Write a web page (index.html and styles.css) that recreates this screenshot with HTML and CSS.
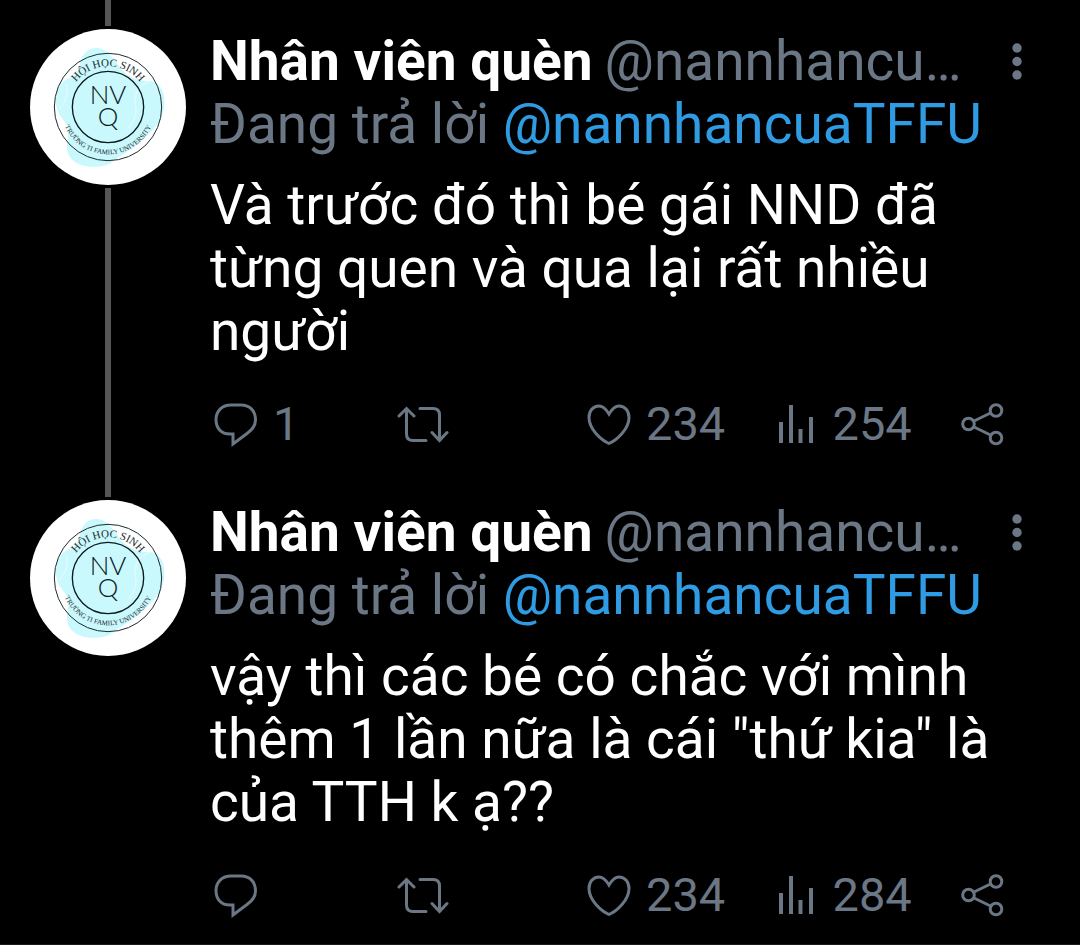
FILE: index.html
```html
<!DOCTYPE html>
<html lang="vi">
<head>
  <meta charset="UTF-8">
  <meta name="viewport" content="width=device-width, initial-scale=1.0">
  <title>Nhân viên quèn</title>
  <link rel="stylesheet" href="styles.css">
</head>
<body>
  <!-- Shared icons -->
  <svg class="sprite" aria-hidden="true">
    <symbol id="logo" viewBox="0 0 468 468">
      <circle cx="234" cy="234" r="234" fill="#fff"/>
      <path d="M150 104C158 70 176 56 202 57C228 59 240 78 262 104C290 150 330 156 362 156C394 162 408 196 402 236C396 280 370 300 340 330C310 360 270 380 240 404C200 420 150 416 124 390C104 368 112 340 116 310C118 280 84 268 78 226C76 180 92 156 120 146C140 138 144 126 150 104Z" fill="#c9f8fd"/>
      <path d="M108 164C116 190 108 220 88 240M362 156C320 168 310 200 318 240C320 262 310 280 296 296" fill="none" stroke="#e0fbfe" stroke-width="4"/>
      <circle cx="234" cy="234" r="161" fill="none" stroke="#1d2b2e" stroke-width="3"/>
      <circle cx="234" cy="234" r="107" fill="none" stroke="#0c1a1d" stroke-width="4"/>
      <path id="arc-top" d="M112 234A122 122 0 0 1 356 234" fill="none"/>
      <path id="arc-bottom" d="M92 234A142 142 0 0 0 376 234" fill="none"/>
      <text class="logo-top"><textPath href="#arc-top" startOffset="50%">HỘI HỌC SINH</textPath></text>
      <text class="logo-bottom"><textPath href="#arc-bottom" startOffset="50%">TRƯỜNG TI FAMILY UNIVERSITY</textPath></text>
      <text class="logo-letters" x="234" y="224">NV</text>
      <text class="logo-letters" x="234" y="291">Q</text>
    </symbol>
    <symbol id="reply" viewBox="0 0 52 52">
      <path d="M21 7H31C40 7 45.5 13 45.5 22C45.5 27 42 32 37 35.5L23 46V36H20C11 36 6 30 6 21.5C6 13 12 7 21 7Z"/>
    </symbol>
    <symbol id="retweet" viewBox="0 0 52 52">
      <path d="M2 18L9.5 10.5L17 18M9.5 11V36Q9.5 42.5 16 42.5H29M23 10.5H36Q42.5 10.5 42.5 17V42M35 34.5L42.5 42.5L50 34.5"/>
    </symbol>
    <symbol id="like" viewBox="0 0 52 52">
      <path d="M26 16C23 11 20 8 16 8C10 8 6 13 6 19.5C6 31 18 42 26 45.5C34 42 46 31 46 19.5C46 13 42 8 36 8C32 8 29 11 26 16Z"/>
    </symbol>
    <symbol id="views" viewBox="0 0 52 52">
      <path d="M11 24V45M21 7V45M30.500 31V45M41 19V45" stroke-width="4" stroke-linecap="butt"/>
    </symbol>
    <symbol id="share" viewBox="0 0 52 52">
      <circle cx="12.500" cy="26" r="5.800"/>
      <circle cx="40" cy="12.500" r="5.800"/>
      <circle cx="40" cy="40" r="5.800"/>
      <path d="M18 23L34.500 15M18 29L34.500 37"/>
    </symbol>
    <symbol id="more" viewBox="0 0 42 42">
      <g fill="currentColor" stroke="none">
        <circle cx="21" cy="7" r="4.700"/>
        <circle cx="21" cy="20.500" r="4.700"/>
        <circle cx="21" cy="34" r="4.700"/>
      </g>
    </symbol>
  </svg>

  <main class="thread">
    <article class="tweet">
      <div class="tweet-side">
        <span class="line line-top"></span>
        <svg class="avatar" role="img" aria-label="Nhân viên quèn"><use href="#logo"/></svg>
        <span class="line line-bottom"></span>
      </div>
      <div class="tweet-body">
        <header class="tweet-header">
          <span class="name">Nhân viên quèn</span>
          <span class="handle">@nannhancuaTFFU</span>
          <button class="more" type="button" aria-label="Thêm"><svg><use href="#more"/></svg></button>
        </header>
        <p class="replying">Đang trả lời <a href="#">@nannhancuaTFFU</a></p>
        <p class="text">Và trước đó thì bé gái NND đã từng quen và qua lại rất nhiều người</p>
        <div class="actions">
          <button type="button" aria-label="Trả lời"><svg><use href="#reply"/></svg><span>1</span></button>
          <button type="button" aria-label="Tweet lại"><svg><use href="#retweet"/></svg></button>
          <button type="button" aria-label="Thích"><svg><use href="#like"/></svg><span>234</span></button>
          <button type="button" aria-label="Lượt xem"><svg><use href="#views"/></svg><span>254</span></button>
          <button type="button" aria-label="Chia sẻ"><svg><use href="#share"/></svg></button>
        </div>
      </div>
    </article>

    <article class="tweet">
      <div class="tweet-side">
        <span class="line line-top"></span>
        <svg class="avatar" role="img" aria-label="Nhân viên quèn"><use href="#logo"/></svg>
      </div>
      <div class="tweet-body">
        <header class="tweet-header">
          <span class="name">Nhân viên quèn</span>
          <span class="handle">@nannhancuaTFFU</span>
          <button class="more" type="button" aria-label="Thêm"><svg><use href="#more"/></svg></button>
        </header>
        <p class="replying">Đang trả lời <a href="#">@nannhancuaTFFU</a></p>
        <p class="text">vậy thì các bé có chắc với mình thêm 1 lần nữa là cái "thứ kia" là của TTH k ạ??</p>
        <div class="actions">
          <button type="button" aria-label="Trả lời"><svg><use href="#reply"/></svg></button>
          <button type="button" aria-label="Tweet lại"><svg><use href="#retweet"/></svg></button>
          <button type="button" aria-label="Thích"><svg><use href="#like"/></svg><span>234</span></button>
          <button type="button" aria-label="Lượt xem"><svg><use href="#views"/></svg><span>284</span></button>
          <button type="button" aria-label="Chia sẻ"><svg><use href="#share"/></svg></button>
        </div>
      </div>
    </article>
  </main>
</body>
</html>
```

FILE: styles.css
```css
/* Base styles */
body {
  margin: 0;
  background-color: #000;
  color: #fff;
  font-family: Roboto, "Noto Sans", sans-serif;
  font-size: 55px;
  line-height: 63px;
}

p {
  margin: 0;
}

a {
  color: #2f9be3;
  text-decoration: none;
}

button {
  padding: 0;
  border: none;
  background: none;
  color: inherit;
  font: inherit;
  cursor: pointer;
}

.sprite {
  display: none;
}

/* Tweet */
.thread {
  padding-bottom: 2px;
  border-bottom: 1px solid #1c1a1c;
}

.tweet {
  display: flex;
  gap: 24px;
  padding: 0 42px 0 30px;
}

.tweet-side {
  display: flex;
  flex-direction: column;
  align-items: center;
  flex: none;
  gap: 3px;
}

.line {
  width: 6px;
  background-color: #555;
}

.line-top {
  height: 26px;
}

.line-bottom {
  flex: 1;
}

.avatar {
  width: 156px;
  height: 156px;
}

.tweet-body {
  flex: 1;
  min-width: 0;
  padding: 30px 0 16px;
}

.tweet-header {
  display: flex;
  align-items: center;
}

.name {
  flex: none;
  margin-right: 12px;
  font-weight: bold;
}

.handle {
  flex: 1;
  min-width: 0;
  margin-right: 20px;
  overflow: hidden;
  text-overflow: ellipsis;
  white-space: nowrap;
}

.handle,
.more,
.replying,
.actions {
  color: #6b7785;
}

.more,
.more svg {
  display: block;
  width: 42px;
  height: 42px;
}

.text {
  margin-top: 18px;
}

/* Action buttons */
.actions {
  display: grid;
  grid-template-columns: repeat(4, 1fr) 52px;
  margin-top: 35px;
  padding: 0 30px 5px 0;
  font-size: 47px;
  line-height: 52px;
}

.actions button {
  display: flex;
  align-items: center;
  gap: 11px;
}

.actions svg {
  width: 52px;
  height: 52px;
  fill: none;
  stroke: currentColor;
  stroke-width: 3;
  stroke-linecap: round;
}

/* Logo lettering */
.logo-top,
.logo-bottom {
  font-family: "Liberation Serif", serif;
  fill: #1d2b2e;
  text-anchor: middle;
}

.logo-top {
  font-size: 33px;
}

.logo-bottom {
  font-size: 21px;
}

.logo-letters {
  font-family: Lato, sans-serif;
  font-size: 78px;
  font-weight: 300;
  fill: #0c1a1d;
  text-anchor: middle;
}
```
